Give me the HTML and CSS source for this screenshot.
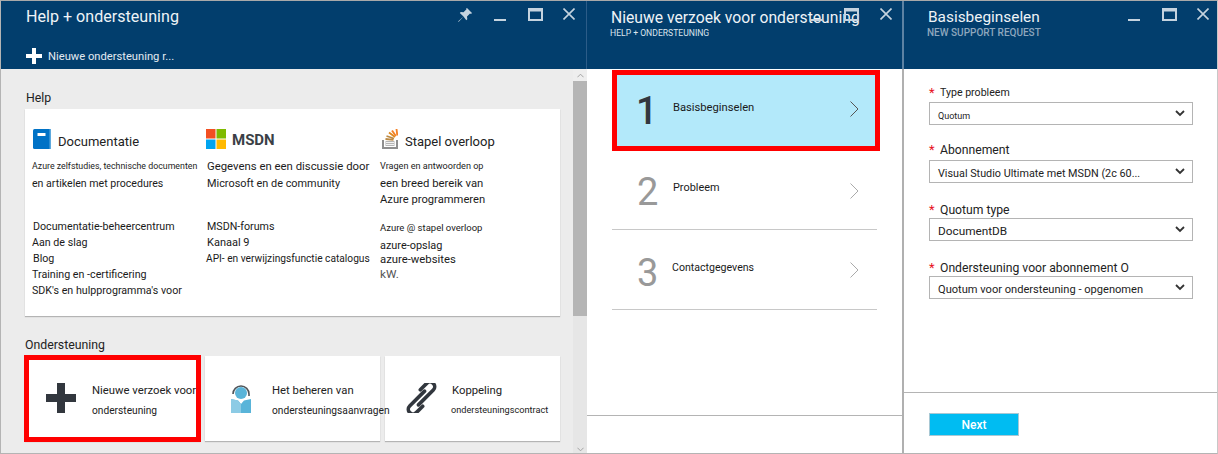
FILE: index.html
```html
<!DOCTYPE html>
<html lang="nl">
<head>
<meta charset="utf-8">
<title>Help + ondersteuning</title>
<link rel="stylesheet" href="styles.css">
</head>
<body>
<div class="app">
  <section class="blade blade-help">
    <header class="head head-help">
      <h1 class="title">Help + ondersteuning</h1>
      <div class="command">
        <svg class="cmd-plus" viewBox="0 0 16 16"><path d="M6 0h4v6h6v4h-6v6H6v-6H0V6h6z" fill="#fff"/></svg>
        <span class="cmd-text">Nieuwe ondersteuning r...</span>
      </div>
      <svg class="ico ico-pin" viewBox="0 0 14 14"><path d="M9 0l5 5-1 1-1-.5-3 3 .3 2.700-1 1L5.500 8.500 1 13.500 0 14l.5-1 5-4.500L1.800 5l1-1 2.700.3 3-3L8 .8z" fill="#c5d3df"/></svg>
      <svg class="ico ico-min p1-min" viewBox="0 0 12 2"><path d="M0 0h12v2H0z" fill="#c5d3df"/></svg>
      <svg class="ico ico-max p1-max" viewBox="0 0 15 13"><path d="M0 0h15v13H0zM2 3.500V11h11V3.500z" fill="#c5d3df" fill-rule="evenodd"/></svg>
      <svg class="ico ico-close p1-close" viewBox="0 0 12 12"><path d="M.5.500l11 11M11.500.500l-11 11" stroke="#c5d3df" stroke-width="1.600"/></svg>
    </header>
    <div class="help-body">
      <div class="help-main">
        <h2 class="section section-help">Help</h2>
        <div class="card help-card">
          <div class="col col-doc">
            <div class="brand">
              <svg class="brand-ico" viewBox="0 0 18 20"><path d="M0 1.500Q0 0 1.500 0H18v20H1.500Q0 20 0 18.500z" fill="#0072c6"/><path d="M16.500 0H18v20h-1.500z" fill="#5ea9dd"/><path d="M4.500 4h8v3h-8z" fill="#fff"/></svg>
              <span class="brand-name">Documentatie</span>
            </div>
            <p class="line s88 desc1">Azure zelfstudies, technische documenten</p>
            <p class="line s106 desc2">en artikelen met procedures</p>
            <ul class="links">
              <li class="in1">Documentatie-beheercentrum</li>
              <li>Aan de slag</li>
              <li class="in1">Blog</li>
              <li>Training en -certificering</li>
              <li>SDK's en hulpprogramma's voor</li>
            </ul>
          </div>
          <div class="col col-msdn">
            <div class="brand">
              <svg class="brand-ico" viewBox="0 0 20 20"><path d="M0 0h9.500v9.500H0z" fill="#f25022"/><path d="M10.500 0H20v9.500h-9.500z" fill="#7fba00"/><path d="M0 10.500h9.500V20H0z" fill="#00a4ef"/><path d="M10.500 10.500H20V20h-9.500z" fill="#ffb900"/></svg>
              <span class="brand-name msdn">MSDN</span>
            </div>
            <p class="line s114 desc1 in1">Gegevens en een discussie door</p>
            <p class="line s109 desc2 in1">Microsoft en de community</p>
            <ul class="links">
              <li class="in1">MSDN-forums</li>
              <li class="s110 in1">Kanaal 9</li>
              <li class="s102">API- en verwijzingsfunctie catalogus</li>
            </ul>
          </div>
          <div class="col col-so">
            <div class="brand">
              <svg class="brand-ico so" viewBox="0 0 16 20"><path d="M0 11h2v7h12v-7h2v9H0z" fill="#8f8f8f"/><path d="M3.500 12h9v5h-9z" fill="#b5b5b5"/><path d="M4 13.500h8M4 15.500h8" stroke="#f2f2f2"/><path d="M3.500 10l8 .8M4.500 7l7.500 2.500" stroke="#bc8a45" stroke-width="1.800"/><path d="M7 3.500l6 4.500" stroke="#e08a20" stroke-width="1.900"/><path d="M10 1.500l3.800 5.500" stroke="#f48024" stroke-width="1.900"/><path d="M14.500 0l.8 6.500" stroke="#f48024" stroke-width="1.900"/></svg>
              <span class="brand-name so-name">Stapel overloop</span>
            </div>
            <p class="line s91 desc1">Vragen en antwoorden op</p>
            <p class="line s113 desc2">een breed bereik van</p>
            <p class="line s112 desc3">Azure programmeren</p>
            <ul class="links links-so">
              <li class="s95">Azure @ stapel overloop</li>
              <li class="ops">azure-opslag</li>
              <li class="web">azure-websites</li>
              <li class="kw">kW.</li>
            </ul>
          </div>
        </div>
        <h2 class="section section-support">Ondersteuning</h2>
        <div class="tiles">
          <div class="card tile tile-new">
            <svg class="tile-ico" viewBox="0 0 30 30"><path d="M11 0h8v11h11v8H19v11h-8V19H0v-8h11z" fill="#32373e"/></svg>
            <div class="tile-text"><p class="t1">Nieuwe verzoek voor</p><p class="t2">ondersteuning</p></div>
          </div>
          <div class="card tile tile-manage">
            <svg class="tile-ico person" viewBox="0 0 20 30"><path d="M2 11a8 8 0 0 1 16 0v2" fill="none" stroke="#50555a" stroke-width="1.600"/><circle cx="10" cy="10" r="6" fill="#59b4d9"/><path d="M0 16l7 1.500 3 3.500 3-3.500 7-1.500v14H0z" fill="#59b4d9"/><path d="M0 16l7 1.500 3 3.500v9H0z" fill="#8ccbe5"/></svg>
            <div class="tile-text"><p class="t1">Het beheren van</p><p class="t2">ondersteuningsaanvragen</p></div>
          </div>
          <div class="card tile tile-link">
            <svg class="tile-ico link" viewBox="0 0 32 30"><g transform="translate(15.500 15) rotate(-45)" fill="none" stroke="#32373e" stroke-width="3.600" stroke-linecap="round"><path d="M-7 2.700H14a4.700 4.700 0 0 0 0-9.400H5"/><path d="M7-2.700H-14a4.700 4.700 0 0 0 0 9.400H-5"/></g></svg>
            <div class="tile-text"><p class="t1">Koppeling</p><p class="t2 t2-link">ondersteuningscontract</p></div>
          </div>
        </div>
      </div>
      <div class="scrollbar">
        <div class="sb-btn"><svg viewBox="0 0 8 5"><path d="M.5 4.500L4 1l3.500 3.500" fill="none" stroke="#9a9a9a"/></svg></div>
        <div class="sb-thumb"></div>
        <div class="sb-track"><svg viewBox="0 0 8 5"><path d="M.5.500L4 4 7.500.500" fill="none" stroke="#9a9a9a"/></svg></div>
      </div>
    </div>
  </section>

  <section class="blade blade-steps">
    <header class="head head-sub head-steps">
      <h1 class="title title-sub">Nieuwe verzoek voor ondersteuning</h1>
      <p class="subtitle">HELP + ONDERSTEUNING</p>
      <svg class="ico ico-min p2-min" viewBox="0 0 12 2"><path d="M0 0h12v2H0z" fill="#c5d3df"/></svg>
      <svg class="ico ico-max p2-max" viewBox="0 0 15 13"><path d="M0 0h15v13H0zM2 3.500V11h11V3.500z" fill="#c5d3df" fill-rule="evenodd"/></svg>
      <svg class="ico ico-close p2-close" viewBox="0 0 12 12"><path d="M.5.500l11 11M11.500.500l-11 11" stroke="#c5d3df" stroke-width="1.600"/></svg>
    </header>
    <div class="steps">
      <div class="step step-active">
        <span class="num num-active">1</span><span class="step-label">Basisbeginselen</span>
        <svg class="chev" viewBox="0 0 9 16"><path d="M.5.500L8 8 .5 15.500" fill="none" stroke="#555" stroke-width="1"/></svg>
      </div>
      <div class="step step-two">
        <span class="num">2</span><span class="step-label">Probleem</span>
        <svg class="chev" viewBox="0 0 9 16"><path d="M.5.500L8 8 .5 15.500" fill="none" stroke="#aaa" stroke-width="1"/></svg>
      </div>
      <div class="step step-three">
        <span class="num">3</span><span class="step-label label-3">Contactgegevens</span>
        <svg class="chev" viewBox="0 0 9 16"><path d="M.5.500L8 8 .5 15.500" fill="none" stroke="#aaa" stroke-width="1"/></svg>
      </div>
    </div>
    <div class="blade-foot foot-steps"></div>
  </section>

  <section class="blade blade-form">
    <header class="head head-sub">
      <h1 class="title title-form">Basisbeginselen</h1>
      <p class="subtitle subtitle-form">NEW SUPPORT REQUEST</p>
      <svg class="ico ico-min p3-min" viewBox="0 0 12 2"><path d="M0 0h12v2H0z" fill="#c5d3df"/></svg>
      <svg class="ico ico-max p3-max" viewBox="0 0 15 13"><path d="M0 0h15v13H0zM2 3.500V11h11V3.500z" fill="#c5d3df" fill-rule="evenodd"/></svg>
      <svg class="ico ico-close p3-close" viewBox="0 0 12 12"><path d="M.5.500l11 11M11.500.500l-11 11" stroke="#c5d3df" stroke-width="1.600"/></svg>
    </header>
    <form class="form">
      <div class="field">
        <label class="label lift1"><span class="star">*</span><span class="lbl-s">Type probleem</span></label>
        <div class="select"><span class="val-xs">Quotum</span><svg class="caret" viewBox="0 0 10 7"><path d="M1 1l4 4 4-4" fill="none" stroke="#333" stroke-width="1.800"/></svg></div>
      </div>
      <div class="field">
        <label class="label lift2"><span class="star">*</span><span>Abonnement</span></label>
        <div class="select"><span class="val-s">Visual Studio Ultimate met MSDN (2c 60...</span><svg class="caret" viewBox="0 0 10 7"><path d="M1 1l4 4 4-4" fill="none" stroke="#333" stroke-width="1.800"/></svg></div>
      </div>
      <div class="field">
        <label class="label"><span class="star">*</span><span>Quotum type</span></label>
        <div class="select"><span class="val-m">DocumentDB</span><svg class="caret" viewBox="0 0 10 7"><path d="M1 1l4 4 4-4" fill="none" stroke="#333" stroke-width="1.800"/></svg></div>
      </div>
      <div class="field">
        <label class="label"><span class="star">*</span><span>Ondersteuning voor abonnement O</span></label>
        <div class="select"><span class="val-l">Quotum voor ondersteuning - opgenomen</span><svg class="caret" viewBox="0 0 10 7"><path d="M1 1l4 4 4-4" fill="none" stroke="#333" stroke-width="1.800"/></svg></div>
      </div>
    </form>
    <div class="blade-foot foot-form"><button class="next" type="button">Next</button></div>
  </section>
</div>
</body>
</html>
```

FILE: styles.css
```css
* { box-sizing: border-box; }
html, body { margin: 0; padding: 0; }
body { width: 1218px; height: 454px; overflow: hidden; background: #fff; font-family: Roboto, "Open Sans", sans-serif; color: #1a1a1a; }
p, h1, h2, ul { margin: 0; padding: 0; font-weight: 400; }
ul { list-style: none; }
.app { display: flex; width: 1218px; height: 454px; border-top: 1px solid #a9a9a9; border-bottom: 1px solid #b4b4b4; border-left: 1px solid #b4b4b4; border-right: 1px solid #c8c8c8; }
.blade { display: flex; flex-direction: column; height: 100%; position: relative; }
.blade-help { width: 586px; }
.blade-steps { width: 317px; border-right: 2px solid #b0b0b0; }
.blade-form { width: 313px; }

.head { background: #023e6d; height: 68px; flex: none; position: relative; color: #fff; }
.head-help { padding: 5px 0 0 25px; border-right: 1px solid #2c5c88; }
.head-steps { margin-right: -2px; border-right: 2px solid #5d82a3; }
.title { font-size: 16.100px; line-height: 22px; color: #eef3f7; white-space: nowrap; }
.command { display: flex; align-items: center; margin-top: 19px; font-size: 11.200px; line-height: 14px; color: #e2eaf1; }
.cmd-plus { width: 16px; height: 16px; margin-right: 6px; }
.cmd-text { padding-top: 3px; }

.ico { position: absolute; display: block; }
.ico-pin { left: 457px; top: 7px; width: 14px; height: 14px; }
.ico-min { top: 18px; width: 12px; height: 2px; }
.ico-max { top: 7px; width: 15px; height: 13px; }
.ico-close { top: 7px; width: 12px; height: 12px; }
.p1-min { left: 493px; } .p1-max { left: 527px; } .p1-close { left: 562px; }
.p2-min { left: 224px; } .p2-max { left: 257px; } .p2-close { left: 293px; }
.p3-min { left: 224px; } .p3-max { left: 258px; } .p3-close { left: 293px; }

.help-body { flex: 1; display: flex; min-height: 0; background: #ececec; }
.help-main { flex: 1; padding: 0 13px 0 24px; }
.section { font-size: 12.300px; line-height: 16px; color: #222; }
.section-help { padding: 21px 0 3px 1px; }
.section-support { margin-top: 21px; height: 19px; line-height: 17px; }
.card { background: #fff; box-shadow: 0 1px 1px #b4b4b4; }
.help-card { display: grid; grid-template-columns: 174px 174px 1fr; height: 207px; padding: 20px 0 0 7px; }
.brand { display: flex; align-items: center; height: 20px; }
.brand-ico { width: 18px; height: 20px; flex: none; }
.col-doc .brand-ico { margin-left: 1px; }
.col-msdn .brand-ico { width: 20px; }
.brand-name { font-size: 13px; line-height: 20px; margin-left: 7px; padding-top: 5px; color: #222; }
.msdn { font-size: 15px; font-weight: 700; color: #3b3f46; margin-left: 6px; padding-top: 2px; }
.brand-ico.so { width: 16px; margin-left: 2px; }
.so-name { margin-left: 7px; }
.line { white-space: nowrap; color: #1c1c1c; }
.s88 { font-size: 8.800px; }
.s91 { font-size: 9.100px; }
.s95 { font-size: 9.500px; }
.s102 { font-size: 10.200px; }
.s106 { font-size: 10.600px; }
.s109 { font-size: 10.900px; }
.s110 { font-size: 11px; }
.s112 { font-size: 11.200px; }
.s113 { font-size: 11.300px; }
.s114 { font-size: 11.350px; }
.desc1 { line-height: 16px; margin-top: 9px; }
.desc2 { line-height: 16px; margin-top: 2px; }
.desc3 { line-height: 16px; }
.links { margin-top: 27px; font-size: 10.700px; line-height: 16px; white-space: nowrap; }
.in1 { padding-left: 1px; }
.links-so { margin-top: 12px; }
.links-so .ops { font-size: 10.900px; line-height: 18px; padding-top: 1px; }
.links-so .web { font-size: 11.300px; line-height: 10px; }
.links-so .kw { font-size: 11.800px; line-height: 18px; color: #555; }

.tiles { display: flex; gap: 5px; }
.tile { flex: none; width: 175px; height: 85px; display: flex; align-items: flex-start; position: relative; }
.tile-new { outline: 5px solid #f00; outline-offset: -4px; }
.tile-ico { flex: none; margin-top: 27px; }
.tile-new .tile-ico { width: 30px; height: 30px; margin-left: 21px; }
.tile-text { margin-left: 16px; padding-top: 27px; white-space: nowrap; }
.tile-manage { z-index: 1; }
.person { width: 20px; height: 30px; margin-left: 26px; }
.tile-manage .tile-text { margin-left: 21px; }
.link { width: 32px; height: 30px; margin-left: 21px; }
.tile-link .tile-text { margin-left: 14px; }
.t1 { font-size: 11.300px; line-height: 16px; color: #222; }
.t2 { font-size: 10.200px; line-height: 16px; margin-top: 4px; color: #222; }
.t2-link { font-size: 9.200px; margin-top: 3px; margin-left: -1px; }

.scrollbar { width: 14px; flex: none; display: flex; flex-direction: column; background: #e6e6e6; }
.sb-btn { height: 12px; background: #eee; display: flex; align-items: center; justify-content: center; }
.sb-btn svg, .sb-track svg { width: 7px; height: 5px; }
.sb-thumb { height: 235px; background: #b5b5b5; }
.sb-track { flex: 1; display: flex; align-items: flex-end; justify-content: center; padding-bottom: 1px; }

.title-sub { position: absolute; left: 24px; top: 6px; font-size: 15.700px; }
.title-form { position: absolute; left: 24px; top: 5px; font-size: 15.400px; }
.subtitle { position: absolute; left: 23px; top: 26px; font-size: 8.600px; line-height: 12px; color: #dbe5ed; }
.subtitle-form { font-size: 10px; color: #8ea7bd; font-weight: 500; top: 26px; }

.steps { flex: 1; padding: 1px 25px 0 25px; }
.step { display: flex; align-items: flex-start; position: relative; height: 80px; width: 265px; border-bottom: 1px solid #c8c8c8; }
.step-active { height: 81px; width: 268px; background: #b3e9fa; border: 5px solid #f00; margin-bottom: 0; }
.step-two { height: 79px; }
.num { font-size: 38px; line-height: 36px; color: #999; width: 61px; margin-top: 23px; padding-left: 25px; }
.step-three .num { margin-top: 25px; }
.num-active { color: #32373e; margin-top: 18px; padding-left: 19px; width: 56px; font-weight: 500; }
.step-label { font-size: 10.900px; line-height: 14px; color: #1a1a1a; margin-top: 30px; }
.step-active .step-label { margin-top: 26px; font-size: 11.200px; }
.label-3 { margin-left: -1px; margin-top: 31px; font-size: 10.600px; }
.chev { position: absolute; left: 238px; top: 32px; width: 9px; height: 16px; }
.step-active .chev { left: 233px; top: 26px; }

.blade-foot { flex: none; border-top: 1px solid #b4b4b4; }
.foot-steps { height: 38px; }
.foot-form { height: 61px; padding: 20px 0 0 25px; }

.form { flex: 1; padding: 15px 24px 0 25px; }
.field { height: 58px; }
.label { display: flex; height: 19px; align-items: center; font-size: 12.200px; color: #222; }
.lift1 { padding-bottom: 2px; }
.lift2 { padding-bottom: 4px; }
.star { color: #e81123; width: 11px; font-size: 13px; line-height: 12px; }
.lbl-s { font-size: 10.600px; }
.select { height: 23px; margin-top: -1px; border: 1px solid #b4b4b4; background: #fff; display: flex; align-items: center; padding: 0 7px 0 8px; position: relative; white-space: nowrap; color: #222; }
.caret { width: 10px; height: 7px; margin-left: auto; flex: none; }
.val-xs { font-size: 9px; padding-top: 4px; }
.val-s { font-size: 10.800px; padding-top: 4px; }
.val-m { font-size: 11.800px; padding-top: 2px; }
.val-l { font-size: 11.100px; padding-top: 4px; }
.next { width: 90px; height: 23px; background: #00bcf2; border: 1px solid #a8c8d4; color: #fff; font: 500 12px Roboto, sans-serif; padding: 0; }
```
